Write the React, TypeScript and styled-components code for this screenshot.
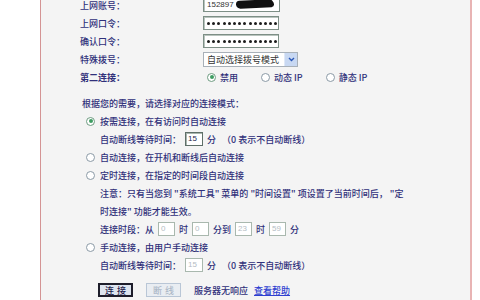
import React from "react";
import styled, { createGlobalStyle } from "styled-components";

const TEXT = "#30307a";
const FONT = `"Noto Sans CJK SC", "Noto Sans", sans-serif`;

const GlobalStyle = createGlobalStyle`
  html, body {
    margin: 0;
    padding: 0;
    background: #ffffff;
  }
  body {
    width: 480px;
    height: 300px;
    overflow: hidden;
    font-family: ${FONT};
  }
`;

const Frame = styled.div`
  margin-left: 40px;
  width: 432px;
  height: 300px;
  box-sizing: border-box;
  border-left: 1px solid #d49494;
  border-right: 2px solid #e8b4b4;
  background: #f4f4f4;
  overflow: hidden;
  color: ${TEXT};
  font-size: 9px;
  font-weight: 500;
  line-height: 1;
`;

const Form = styled.div`
  margin-top: -4px;
  padding-left: 39px;
  display: grid;
  grid-template-columns: 123px 1fr;
  grid-auto-rows: 18px;
  align-items: center;
`;

const Label = styled.div<{ $bold?: boolean }>`
  font-weight: ${(p) => (p.$bold ? 700 : 500)};
  white-space: nowrap;
`;

const Field = styled.div`
  display: flex;
  align-items: center;
`;

const TextBox = styled.div<{ $width: number }>`
  width: ${(p) => p.$width}px;
  height: 14px;
  box-sizing: border-box;
  border: 1px solid #7d8f86;
  box-shadow: inset 1px 1px 0 #b9c4be;
  background: #ffffff;
  display: flex;
  align-items: center;
  padding: 0 3px;
  gap: 2px;
  font-family: "Liberation Sans", sans-serif;
  font-weight: 400;
  font-size: 8px;
  color: #333;
`;

const Scribble = styled.span`
  width: 38px;
  height: 8px;
  margin-top: -3px;
  border-radius: 4px 6px 3px 5px;
  background: #111;
  transform: rotate(-3deg);
`;

const Dot = styled.span`
  width: 3px;
  height: 3px;
  border-radius: 50%;
  background: #1c1c1c;
`;

const Dots = styled.div`
  display: flex;
  gap: 2.2px;
`;

const Select = styled.div`
  width: 95px;
  height: 15px;
  box-sizing: border-box;
  border: 1px solid #a8b0b8;
  background: #ffffff;
  display: flex;
  align-items: center;
  justify-content: space-between;
  padding-left: 3px;
  color: #333;
  font-weight: 400;
`;

const Arrow = styled.span`
  width: 12px;
  height: 13px;
  background: #c8d8f2;
  border-left: 1px solid #dfe8f8;
  display: flex;
  align-items: center;
  justify-content: center;
`;

const Options = styled.div`
  display: flex;
  align-items: center;
  padding-left: 4px;
`;

const Option = styled.label`
  display: flex;
  align-items: center;
  gap: 4px;
  margin-right: 23px;
  white-space: nowrap;
`;

const Radio = styled.span<{ $checked?: boolean }>`
  flex: none;
  width: 9px;
  height: 9px;
  box-sizing: border-box;
  border-radius: 50%;
  border: 1px solid ${(p) => (p.$checked ? "#6f9c82" : "#8b9aa6")};
  background: #ffffff;
  display: flex;
  align-items: center;
  justify-content: center;
  &::after {
    content: "";
    width: 4px;
    height: 4px;
    border-radius: 50%;
    background: ${(p) => (p.$checked ? "#3f9d62" : "transparent")};
  }
`;

const Modes = styled.div`
  margin-top: 8px;
  padding-left: 41px;
  display: flex;
  flex-direction: column;
`;

const Line = styled.div<{ $indent?: number }>`
  height: 18px;
  display: flex;
  align-items: center;
  padding-left: ${(p) => p.$indent ?? 0}px;
  white-space: nowrap;
`;

const ModeLine = styled(Line)`
  gap: 5px;
`;

const Small = styled.div<{ $disabled?: boolean; $width?: number }>`
  width: ${(p) => p.$width ?? 17}px;
  height: 14px;
  box-sizing: border-box;
  margin: 0 4px;
  border: 1px solid ${(p) => (p.$disabled ? "#a9b8ae" : "#5f6f68")};
  box-shadow: ${(p) => (p.$disabled ? "none" : "inset 1px 1px 0 #a9b5ae")};
  background: #ffffff;
  display: flex;
  align-items: center;
  padding-left: 2px;
  font-family: "Liberation Sans", sans-serif;
  font-weight: 400;
  font-size: 8px;
  color: ${(p) => (p.$disabled ? "#b4bcc4" : "#1f1f4f")};
`;

const Gap = styled.span<{ $w: number }>`
  display: inline-block;
  width: ${(p) => p.$w}px;
`;

const Actions = styled.div`
  margin-top: 9px;
  padding-left: 57px;
  display: flex;
  align-items: center;
  white-space: nowrap;
`;

const Button = styled.div<{ $disabled?: boolean }>`
  width: 35px;
  height: 14px;
  box-sizing: border-box;
  margin-right: 13px;
  display: flex;
  align-items: center;
  justify-content: center;
  letter-spacing: 3px;
  padding-left: 3px;
  background: ${(p) => (p.$disabled ? "#e9edf2" : "#dde4ee")};
  border: ${(p) => (p.$disabled ? "1px solid #b9c6d6" : "2px solid #1d1d2a")};
  color: ${(p) => (p.$disabled ? "#aeb9c8" : "#1d1d4a")};
`;

const Status = styled.span`
  margin-right: 6px;
`;

const HelpLink = styled.a`
  color: #2d3fd0;
  text-decoration: underline;
`;

const ChevronDown = () => (
  <svg width="7" height="5" viewBox="0 0 7 5">
    <path d="M1 1 L3.5 3.5 L6 1" fill="none" stroke="#2a58b8" strokeWidth="1.4" />
  </svg>
);

const Password = () => (
  <TextBox $width={76}>
    <Dots>
      {Array.from({ length: 14 }).map((_, i) => (
        <Dot key={i} />
      ))}
    </Dots>
  </TextBox>
);

const WaitTime = ({ disabled }: { disabled?: boolean }) => (
  <Line $indent={18}>
    自动断线等待时间：
    <Small $disabled={disabled} $width={18}>
      15
    </Small>
    分<Gap $w={6} />（0 表示不自动断线）
  </Line>
);

export default function App() {
  return (
    <>
      <GlobalStyle />
      <Frame>
        <Form>
          <Label>上网账号：</Label>
          <Field>
            <TextBox $width={77}>
              152897
              <Scribble />
            </TextBox>
          </Field>
          <Label>上网口令：</Label>
          <Field>
            <Password />
          </Field>
          <Label>确认口令：</Label>
          <Field>
            <Password />
          </Field>
          <Label>特殊拨号：</Label>
          <Field>
            <Select>
              自动选择拨号模式
              <Arrow>
                <ChevronDown />
              </Arrow>
            </Select>
          </Field>
          <Label $bold>第二连接：</Label>
          <Options>
            <Option>
              <Radio $checked />
              禁用
            </Option>
            <Option>
              <Radio />
              动态 IP
            </Option>
            <Option>
              <Radio />
              静态 IP
            </Option>
          </Options>
        </Form>

        <Modes>
          <Line>根据您的需要，请选择对应的连接模式：</Line>
          <ModeLine $indent={4}>
            <Radio $checked />
            按需连接，在有访问时自动连接
          </ModeLine>
          <WaitTime />
          <ModeLine $indent={4}>
            <Radio />
            自动连接，在开机和断线后自动连接
          </ModeLine>
          <ModeLine $indent={4}>
            <Radio />
            定时连接，在指定的时间段自动连接
          </ModeLine>
          <Line $indent={18}>注意：只有当您到 "系统工具" 菜单的 "时间设置" 项设置了当前时间后， "定</Line>
          <Line $indent={18}>时连接" 功能才能生效。</Line>
          <Line $indent={18}>
            连接时段：从
            <Small $disabled>0</Small>时
            <Small $disabled>0</Small>分到
            <Small $disabled>23</Small>时
            <Small $disabled>59</Small>分
          </Line>
          <ModeLine $indent={4}>
            <Radio />
            手动连接，由用户手动连接
          </ModeLine>
          <WaitTime disabled />
        </Modes>

        <Actions>
          <Button>连接</Button>
          <Button $disabled>断线</Button>
          <Status>服务器无响应</Status>
          <HelpLink href="#">查看帮助</HelpLink>
        </Actions>
      </Frame>
    </>
  );
}
